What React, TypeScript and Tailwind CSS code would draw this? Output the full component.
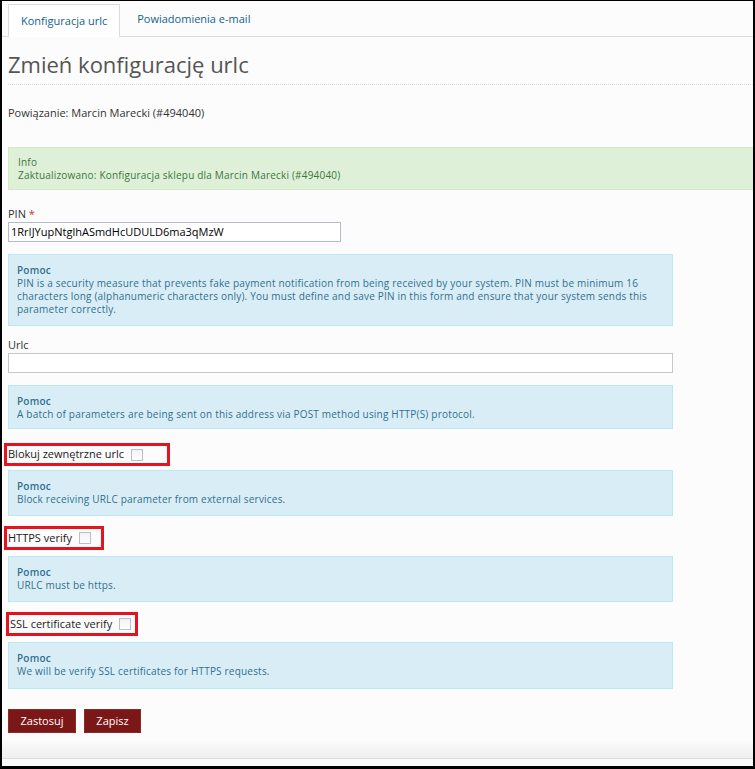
import React from "react";

const font = { fontFamily: '"Open Sans", "DejaVu Sans", sans-serif' };

function Help({ children, className = "" }: { children: React.ReactNode; className?: string }) {
  return (
    <div className={`ml-[6px] w-[665px] border border-[#bce8f1] bg-[#d9edf7] px-[8px] text-[10px] leading-[13px] tracking-[0.2px] text-[#31708f] ${className}`}>
      <div className="font-semibold">Pomoc</div>
      <div>{children}</div>
    </div>
  );
}

function CheckRow({ label, w, className = "" }: { label: string; w: string; className?: string }) {
  return (
    <div className={`flex items-center border-[3px] border-[#e3141f] ${w} ${className}`}>
      <span className="pl-[1px] text-[11px] text-[#222]">{label}</span>
      <span className="ml-[7px] inline-block h-[12px] w-[12px] border border-[#b9c0c8] bg-gradient-to-b from-[#f0f2f4] to-[#ffffff]" />
    </div>
  );
}

export default function App() {
  return (
    <div style={font} className="h-[769px] w-[755px] border-b-[3px] border-l-2 border-r-2 border-t border-black bg-[#fcfcfc]">
      <div className="flex h-[765px] flex-col">
        {/* tabs */}
        <div className="flex h-[36px] items-end border-b border-[#dddddd] pl-[6px]">
          <div className="-mb-px flex h-[33px] items-center border border-b-0 border-[#dddddd] bg-white px-[12px] text-[11px] text-[#135f8c]">
            Konfiguracja urlc
          </div>
          <div className="flex h-[33px] items-center px-[17px] text-[11px] text-[#135f8c]">Powiadomienia e-mail</div>
        </div>

        <div className="pl-[6px]">
          <h1 className="mt-[12px] text-[22px] leading-[30px] text-[#555555]">Zmień konfigurację urlc</h1>
          <div className="mt-[5px] border-b border-dotted border-[#dddddd]" />
          <div className="mt-[21px] text-[11px] leading-[14px] text-[#333333]">Powiązanie: Marcin Marecki (#494040)</div>
        </div>

        <div className="ml-[6px] mt-[27px] h-[43px] border border-r-0 border-[#d6e9c6] bg-[#dff0d8] px-[9px] pt-[8px] text-[10px] leading-[13px] tracking-[0.2px] text-[#3c763d]">
          <div>Info</div>
          <div>Zaktualizowano: Konfiguracja sklepu dla Marcin Marecki (#494040)</div>
        </div>

        <div className="ml-[6px] mt-[17px] text-[11px] leading-[14px] text-[#333]">
          PIN <span className="text-[#c9302c]">*</span>
        </div>
        <div className="ml-[6px] mt-[1px] flex h-[20px] w-[333px] items-center border border-[#b5bcc5] bg-white px-[2px] text-[11px] text-black">
          1RrIJYupNtglhASmdHcUDULD6ma3qMzW
        </div>

        <Help className="mt-[12px] h-[72px] pt-[9px]">
          PIN is a security measure that prevents fake payment notification from being received by your system. PIN must be minimum 16 characters long (alphanumeric characters only). You must define and save PIN in this form and ensure that your system sends this parameter correctly.
        </Help>

        <div className="ml-[6px] mt-[12px] text-[11px] leading-[14px] text-[#333]">Urlc</div>
        <div className="ml-[6px] mt-[1px] h-[20px] w-[665px] border border-[#c3c8ce] bg-white" />

        <Help className="mt-[12px] h-[44px] pt-[9px]">
          A batch of parameters are being sent on this address via POST method using HTTP(S) protocol.
        </Help>

        <CheckRow label="Blokuj zewnętrzne urlc" w="h-[23px] w-[166px]" className="ml-[2px] mt-[14px]" />

        <Help className="mt-[4px] h-[46px] pt-[9px]">Block receiving URLC parameter from external services.</Help>

        <CheckRow label="HTTPS verify" w="h-[24px] w-[100px]" className="ml-[2px] mt-[10px]" />

        <Help className="mt-[6px] h-[46px] pt-[9px]">URLC must be https.</Help>

        <CheckRow label="SSL certificate verify" w="h-[24px] w-[132px]" className="ml-[4px] mt-[10px]" />

        <Help className="mt-[6px] h-[47px] pt-[9px]">We will be verify SSL certificates for HTTPS requests.</Help>

        <div className="ml-[6px] mt-[20px] flex gap-[8px]">
          <button className="h-[24px] w-[68px] border border-[#8a2a2a] bg-[#7b1717] text-[11px] text-white">Zastosuj</button>
          <button className="h-[24px] w-[57px] border border-[#8a2a2a] bg-[#7b1717] text-[11px] text-white">Zapisz</button>
        </div>

        <div className="mt-auto h-[20px] border-b border-[#dcdcdc] bg-gradient-to-b from-[#fcfcfc] to-[#efefef]" />
        <div className="h-[7px] bg-[#fafafa]" />
      </div>
    </div>
  );
}
